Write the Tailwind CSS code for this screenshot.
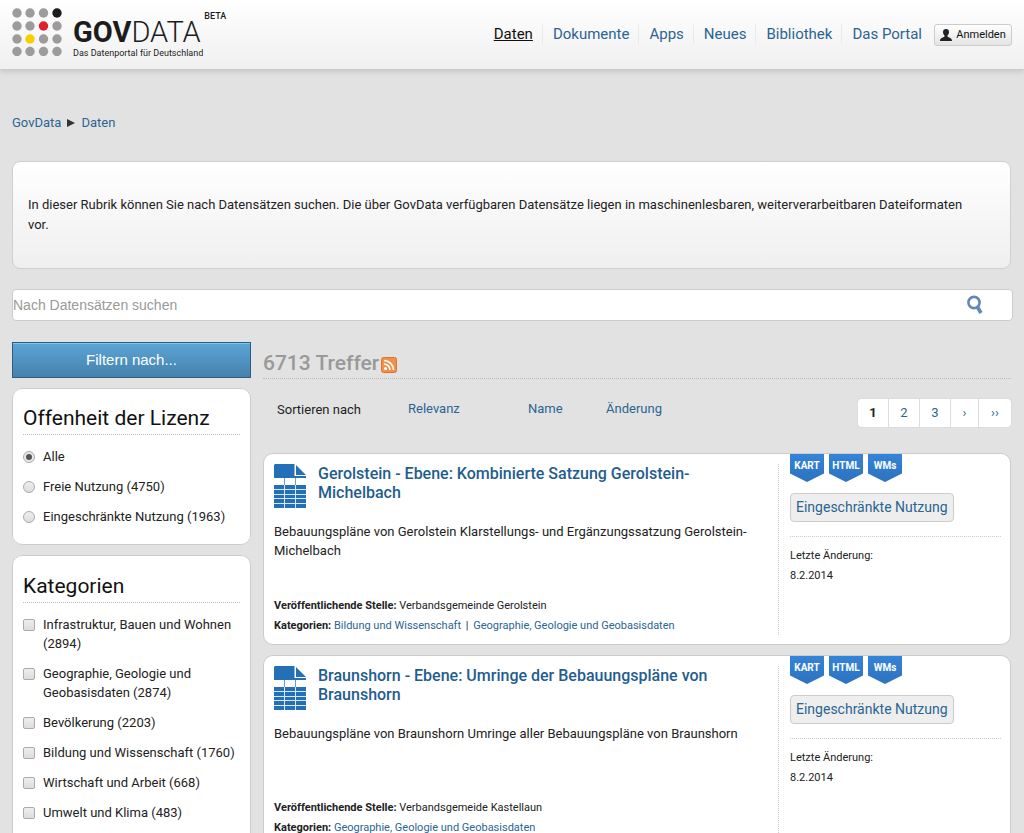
<!DOCTYPE html>
<html lang="de">
<head>
<meta charset="utf-8">
<meta name="viewport" content="width=device-width, initial-scale=1">
<title>GovData – Daten</title>
<script src="https://cdn.jsdelivr.net/npm/@tailwindcss/browser@4"></script>
</head>
<body class="bg-[#e2e2e2] font-['Roboto','Liberation_Sans',sans-serif] text-[13px] leading-5 text-[#222] overflow-x-hidden">
<svg class="hidden">
  <symbol id="doc" viewBox="0 0 32 44">
    <path fill="#2470b8" d="M0 1 1 0h19.500v12H32v2H0zM22 1l10 10H22z"/>
    <path stroke="#6d9bd0" d="M10.500 14v7M21.500 14v7"/>
    <path fill="#2470b8" d="M0 21h32v23H0z"/>
    <path stroke="#dbe8f5" d="M0 25.500h32M0 30.500h32M0 34.500h32M0 39.500h32M10.500 21v23M21.500 21v23"/>
  </symbol>
</svg>

<header class="flex h-[70px] justify-between border-b border-[#ccc] bg-linear-to-b from-white to-[#f0f0f0] px-3 shadow-[0_2px_5px_rgba(0,0,0,0.12)]">
  <a href="#" class="flex pt-2 text-[#1c1c1c]">
    <svg class="h-12 w-[50px]" viewBox="0 0 50 48" fill="#9c9c9c">
      <circle cx="5" cy="5" r="4.700"/><circle cx="18" cy="5" r="4.700"/><circle cx="31.500" cy="5" r="4.700"/><circle cx="45" cy="5" r="4.700" fill="#1c1c1c"/>
      <circle cx="5" cy="18" r="4.700"/><circle cx="18" cy="18" r="4.700"/><circle cx="31.500" cy="18" r="4.700" fill="#e2202c"/><circle cx="45" cy="18" r="4.700"/>
      <circle cx="5" cy="31" r="4.700"/><circle cx="18" cy="31" r="4.700" fill="#f8d000"/><circle cx="31.500" cy="31" r="4.700"/><circle cx="45" cy="31" r="4.700"/>
      <circle cx="5" cy="43.500" r="4.700"/><circle cx="18" cy="43.500" r="4.700"/><circle cx="31.500" cy="43.500" r="4.700"/><circle cx="45" cy="43.500" r="4.700"/>
    </svg>
    <span class="ml-[11px] flex flex-col pt-[9px]">
      <span class="text-[29px] leading-[30px]"><b>GOV</b><span class="font-light">DATA</span></span>
      <span class="text-[9px] leading-3">Das Datenportal für Deutschland</span>
    </span>
    <span class="ml-px text-[9px] leading-4 font-medium">BETA</span>
  </a>
  <div class="flex items-start pt-6">
    <nav class="flex text-[15px] leading-5 text-[#2a6592]">
      <a href="#" class="border-r border-[#eaeaea] pr-[9px] pl-2.5 text-[#111] underline">Daten</a>
      <a href="#" class="border-r border-[#eaeaea] pr-[9px] pl-2.5">Dokumente</a>
      <a href="#" class="border-r border-[#eaeaea] pr-[9px] pl-2.5">Apps</a>
      <a href="#" class="border-r border-[#eaeaea] pr-[9px] pl-2.5">Neues</a>
      <a href="#" class="border-r border-[#eaeaea] pr-[9px] pl-2.5">Bibliothek</a>
      <a href="#" class="pr-3 pl-2.5">Das Portal</a>
    </nav>
    <button class="flex h-[22px] w-[78px] items-center justify-center gap-1 rounded-[3px] border border-[#ccc] bg-linear-to-b from-white to-[#e4e4e4] text-[11px] text-[#111]">
      <svg class="size-3" viewBox="0 0 12 12" fill="#222"><path d="M6 0c2 0 3 1.300 3 3 0 1.500-.6 2.700-1.500 3.400v1.200C9 8.800 12 9 12 12H0c0-3 3-3.200 4.500-4.400V6.400C3.600 5.700 3 4.500 3 3c0-1.700 1-3 3-3z"/></svg>
      Anmelden
    </button>
  </div>
</header>

<main class="pl-3 pr-[11px]">
  <nav class="flex items-center gap-1.5 pt-[43px] text-[#2a6592]">
    <a href="#">GovData</a>
    <svg class="h-2 w-2" viewBox="0 0 8 8"><path d="M0 0l8 4-8 4z" fill="#333"/></svg>
    <a href="#">Daten</a>
  </nav>
  <section class="mt-7 mr-0.5 rounded-lg border border-[#cfcfcf] bg-linear-to-b from-white to-[#efefef] py-[33px] pr-[31px] pl-[15px]">
    <p>In dieser Rubrik können Sie nach Datensätzen suchen. Die über GovData verfügbaren Datensätze liegen in maschinenlesbaren, weiterverarbeitbaren Dateiformaten vor.</p>
  </section>
  <form class="mt-5 flex h-8 items-center rounded border border-[#ccc] bg-white pr-7">
    <input type="text" aria-label="Nach Datensätzen suchen" placeholder="Nach Datensätzen suchen" class="min-w-0 flex-1 font-['Liberation_Sans',sans-serif] text-sm outline-none placeholder:text-[#999]">
    <button type="button" aria-label="Suchen"><svg class="h-5 w-[18px]" viewBox="0 0 18 20" fill="none" stroke="#6288b8"><circle cx="8" cy="7.500" r="5.600" stroke-width="2.600"/><path d="M11.500 12l3.500 6" stroke-width="3.600"/></svg></button>
  </form>

  <div class="mt-[21px] mr-0.5 flex items-start gap-3">
    <aside class="w-[239px] shrink-0">
      <button class="h-9 w-full border border-[#2c5d83] bg-linear-to-b from-[#5ba5d8] to-[#4681ab] font-['Liberation_Sans',sans-serif] text-[15px] text-white shadow-[inset_0_1px_0_#7fc4f0]">Filtern nach...</button>
      <fieldset class="mt-2.5 rounded-[10px] border border-[#ccc] bg-white px-2.5 pt-[15px] pb-[17px]">
        <h2 class="border-b border-dotted border-[#bbb] pb-0.5 text-[21px] leading-7 text-[#111]">Offenheit der Lizenz</h2>
        <div class="mt-3 flex flex-col gap-2.5">
          <label class="flex gap-2"><input type="radio" name="l" checked class="mt-1 grid size-3 shrink-0 appearance-none place-items-center rounded-full border border-[#aaa] bg-[#e8e8e8] before:size-1.5 before:rounded-full before:bg-[#555] before:content-['']">Alle</label>
          <label class="flex gap-2"><input type="radio" name="l" class="mt-1 size-3 shrink-0 appearance-none rounded-full border border-[#aaa] bg-linear-to-b from-[#eee] to-[#ddd]">Freie Nutzung (4750)</label>
          <label class="flex gap-2"><input type="radio" name="l" class="mt-1 size-3 shrink-0 appearance-none rounded-full border border-[#aaa] bg-linear-to-b from-[#eee] to-[#ddd]">Eingeschränkte Nutzung (1963)</label>
        </div>
      </fieldset>
      <fieldset class="mt-2.5 rounded-[10px] border border-[#ccc] bg-white px-2.5 pt-4 pb-12">
        <h2 class="border-b border-dotted border-[#bbb] pb-0.5 text-[21px] leading-7 text-[#111]">Kategorien</h2>
        <div class="mt-3 flex flex-col gap-[11px] leading-[19px]">
          <label class="flex gap-2"><input type="checkbox" class="mt-1 size-3 shrink-0 appearance-none rounded-xs border border-[#aaa] bg-linear-to-b from-[#eee] to-[#ddd]">Infrastruktur, Bauen und Wohnen (2894)</label>
          <label class="flex gap-2"><input type="checkbox" class="mt-1 size-3 shrink-0 appearance-none rounded-xs border border-[#aaa] bg-linear-to-b from-[#eee] to-[#ddd]">Geographie, Geologie und Geobasisdaten (2874)</label>
          <label class="flex gap-2"><input type="checkbox" class="mt-1 size-3 shrink-0 appearance-none rounded-xs border border-[#aaa] bg-linear-to-b from-[#eee] to-[#ddd]">Bevölkerung (2203)</label>
          <label class="flex gap-2"><input type="checkbox" class="mt-1 size-3 shrink-0 appearance-none rounded-xs border border-[#aaa] bg-linear-to-b from-[#eee] to-[#ddd]">Bildung und Wissenschaft (1760)</label>
          <label class="flex gap-2"><input type="checkbox" class="mt-1 size-3 shrink-0 appearance-none rounded-xs border border-[#aaa] bg-linear-to-b from-[#eee] to-[#ddd]">Wirtschaft und Arbeit (668)</label>
          <label class="flex gap-2"><input type="checkbox" class="mt-1 size-3 shrink-0 appearance-none rounded-xs border border-[#aaa] bg-linear-to-b from-[#eee] to-[#ddd]">Umwelt und Klima (483)</label>
        </div>
      </fieldset>
    </aside>

    <section class="min-w-0 flex-1">
      <div class="flex items-center gap-0.5 border-b border-dotted border-[#bbb] pt-2 pb-0.5">
        <h1 class="text-[21px] leading-[26px] font-medium text-[#999]">6713 Treffer</h1>
        <a href="#" aria-label="RSS"><svg class="mt-1 size-4" viewBox="0 0 16 16" fill="none" stroke="#fff"><rect x=".5" y=".5" width="15" height="15" rx="2" fill="#f0914a" stroke="#dc7430"/><circle cx="4.500" cy="11.500" r="1.500" fill="#fff" stroke="none"/><path stroke-width="1.700" d="M3 7a6 6 0 0 1 6 6M3 3.500a9.500 9.500 0 0 1 9.500 9.500"/></svg></a>
      </div>
      <div class="mt-5 flex items-start justify-between">
        <div class="flex pl-3.5 text-[#2a6592]">
          <span class="w-[131px] pt-px text-[#222]">Sortieren nach</span>
          <a href="#" class="w-[120px]">Relevanz</a>
          <a href="#" class="w-[78px]">Name</a>
          <a href="#">Änderung</a>
        </div>
        <nav aria-label="Seiten" class="flex h-7 divide-x divide-[#ddd] rounded-[3px] bg-white text-[13px] leading-7 text-[#2a6592] shadow-[0_0_1px_#aaa]">
          <a href="#" aria-current="page" class="w-[31px] text-center font-bold text-[#222]">1</a>
          <a href="#" class="w-[31px] text-center">2</a>
          <a href="#" class="w-[31px] text-center">3</a>
          <a href="#" class="w-7 text-center">›</a>
          <a href="#" class="w-8 text-center">››</a>
        </nav>
      </div>

      <article class="mt-[26px] flex min-h-[192px] rounded-[10px] border border-[#ccc] bg-white pr-[9px] pl-2.5">
        <div class="mt-2.5 mb-[9px] flex flex-1 flex-col border-r border-dotted border-[#ccc]">
          <div class="flex gap-3">
            <svg class="h-11 w-8 shrink-0" aria-hidden="true"><use href="#doc"/></svg>
            <h3 class="max-w-[420px] text-base leading-[19px] font-medium text-[#1f5d8f]"><a href="#">Gerolstein - Ebene: Kombinierte Satzung Gerolstein-Michelbach</a></h3>
          </div>
          <p class="mt-3.5 pr-5 leading-[19px]">Bebauungspläne von Gerolstein Klarstellungs- und Ergänzungssatzung Gerolstein-Michelbach</p>
          <div class="mt-auto text-[11px]">
            <p><b>Veröffentlichende Stelle:</b> Verbandsgemeinde Gerolstein</p>
            <p class="leading-[19px]"><b>Kategorien:</b> <a href="#" class="text-[#2a6592]">Bildung und Wissenschaft</a> <span class="mx-0.5">|</span> <a href="#" class="text-[#2a6592]">Geographie, Geologie und Geobasisdaten</a></p>
          </div>
        </div>
        <div class="ml-[11px] w-[211px] shrink-0">
          <div class="flex gap-[5px] text-center text-[10px] leading-[23px] font-bold text-white">
            <span class="h-7 w-[34px] bg-linear-to-b from-[#3484d8] to-[#2d72be] [clip-path:polygon(0_0,100%_0,100%_70%,50%_100%,0_70%)]">KART</span>
            <span class="h-7 w-[34px] bg-linear-to-b from-[#3484d8] to-[#2d72be] [clip-path:polygon(0_0,100%_0,100%_70%,50%_100%,0_70%)]">HTML</span>
            <span class="h-7 w-[34px] bg-linear-to-b from-[#3484d8] to-[#2d72be] [clip-path:polygon(0_0,100%_0,100%_70%,50%_100%,0_70%)]">WMs</span>
          </div>
          <a href="#" class="mt-[11px] inline-block rounded border border-[#ccc] bg-[#eee] px-[5px] text-sm leading-[27px] text-[#2a6592]">Eingeschränkte Nutzung</a>
          <p class="mt-3.5 border-t border-dotted border-[#ccc] pt-[9px] text-[11px]">Letzte Änderung:<br>8.2.2014</p>
        </div>
      </article>

      <article class="mt-2.5 flex min-h-[192px] rounded-[10px] border border-[#ccc] bg-white pr-[9px] pl-2.5">
        <div class="mt-2.5 mb-[9px] flex flex-1 flex-col border-r border-dotted border-[#ccc]">
          <div class="flex gap-3">
            <svg class="h-11 w-8 shrink-0" aria-hidden="true"><use href="#doc"/></svg>
            <h3 class="max-w-[420px] text-base leading-[19px] font-medium text-[#1f5d8f]"><a href="#">Braunshorn - Ebene: Umringe der Bebauungspläne von Braunshorn</a></h3>
          </div>
          <p class="mt-3.5 pr-5 leading-[19px]">Bebauungspläne von Braunshorn Umringe aller Bebauungspläne von Braunshorn</p>
          <div class="mt-auto text-[11px]">
            <p><b>Veröffentlichende Stelle:</b> Verbandsgemeide Kastellaun</p>
            <p class="leading-[19px]"><b>Kategorien:</b> <a href="#" class="text-[#2a6592]">Geographie, Geologie und Geobasisdaten</a></p>
          </div>
        </div>
        <div class="ml-[11px] w-[211px] shrink-0">
          <div class="flex gap-[5px] text-center text-[10px] leading-[23px] font-bold text-white">
            <span class="h-7 w-[34px] bg-linear-to-b from-[#3484d8] to-[#2d72be] [clip-path:polygon(0_0,100%_0,100%_70%,50%_100%,0_70%)]">KART</span>
            <span class="h-7 w-[34px] bg-linear-to-b from-[#3484d8] to-[#2d72be] [clip-path:polygon(0_0,100%_0,100%_70%,50%_100%,0_70%)]">HTML</span>
            <span class="h-7 w-[34px] bg-linear-to-b from-[#3484d8] to-[#2d72be] [clip-path:polygon(0_0,100%_0,100%_70%,50%_100%,0_70%)]">WMs</span>
          </div>
          <a href="#" class="mt-[11px] inline-block rounded border border-[#ccc] bg-[#eee] px-[5px] text-sm leading-[27px] text-[#2a6592]">Eingeschränkte Nutzung</a>
          <p class="mt-3.5 border-t border-dotted border-[#ccc] pt-[9px] text-[11px]">Letzte Änderung:<br>8.2.2014</p>
        </div>
      </article>
    </section>
  </div>
</main>
</body>
</html>
